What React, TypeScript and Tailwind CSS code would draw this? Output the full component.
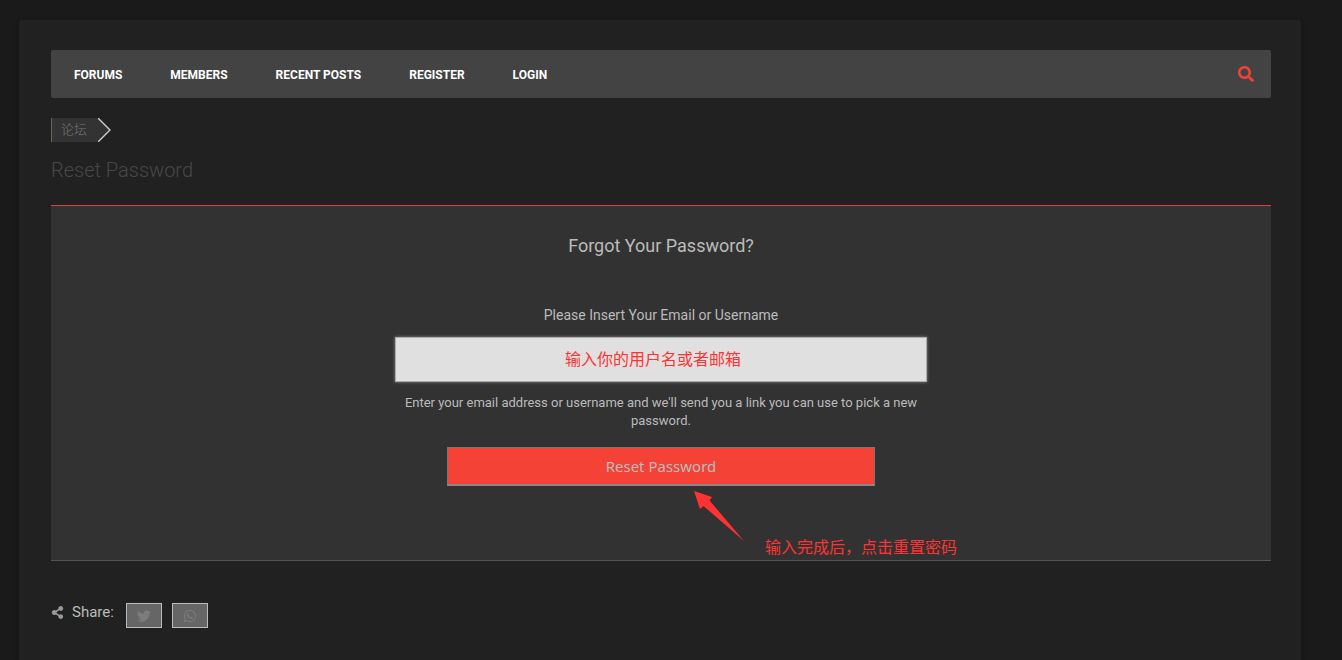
import { FaSearch, FaShareAlt, FaTwitter, FaWhatsapp } from "react-icons/fa";

const navItems = ["Forums", "Members", "Recent Posts", "Register", "Login"];

function NavBar() {
  return (
    <nav className="flex h-12 items-center justify-between rounded-xs bg-[#434343] pr-[17px] pl-[23px]">
      <ul className="flex gap-12">
        {navItems.map((item) => (
          <li key={item}>
            <a href="#" className="text-xs leading-5 font-bold text-white uppercase">
              {item}
            </a>
          </li>
        ))}
      </ul>
      <button type="button" aria-label="Search" className="text-[#f44336]">
        <FaSearch className="size-4" />
      </button>
    </nav>
  );
}

function Breadcrumb() {
  return (
    <div className="mt-5 flex h-6">
      <a
        href="#"
        className="flex items-center border-l border-[#666666] bg-[#333333] pr-[11px] pl-[9px] text-[13px] leading-6 font-light text-[#777777]"
      >
        论坛
      </a>
      <svg width="14" height="24" viewBox="0 0 14 24" aria-hidden="true">
        <path d="M0 0L12 12L0 24Z" fill="#333333" />
        <path d="M0 0L12 12L0 24" fill="none" stroke="#cccccc" strokeWidth="1.4" />
      </svg>
    </div>
  );
}

function ResetForm() {
  return (
    <form
      onSubmit={(e) => e.preventDefault()}
      className="mt-[23px] flex flex-col items-center border-t border-b border-t-[#d0443a] border-b-[#555555] bg-[#323232] px-4 pt-7 pb-[74px] text-center text-[#bbbbbb]"
    >
      <h2 className="text-lg leading-6">Forgot Your Password?</h2>
      <label htmlFor="userlogin" className="mt-[47px] text-sm leading-5">
        Please Insert Your Email or Username
      </label>
      <input
        id="userlogin"
        type="text"
        placeholder="输入你的用户名或者邮箱"
        className="mt-3 h-[45px] w-full max-w-[532px] border border-[#aaaaaa] bg-[#e0e0e0] pr-4 text-center text-base text-[#333333] shadow-[0_0_3px_#888888] outline-none placeholder:text-[#ff3333]"
      />
      <p className="mt-3 max-w-[532px] text-[13px] leading-[18px]">
        Enter your email address or username and we'll send you a link you can use to pick a new
        password.
      </p>
      <div className="relative mt-[17px] w-full max-w-[428px]">
        <button
          type="submit"
          className="block h-[39px] w-full border border-b-2 border-[#777777] border-b-[#888888] bg-[#f44336] font-['Noto_Sans','Noto_Sans_CJK_SC',sans-serif] text-[15px] text-[#bbbbbb]"
        >
          Reset Password
        </button>
        <svg
          className="absolute top-11 left-[247px]"
          width="51"
          height="51"
          viewBox="0 0 51 51"
          aria-hidden="true"
        >
          <path
            d="M0 0L18 6L15.500 9.500L50 50L9.500 15L6 18Z"
            fill="#ff3333"
          />
        </svg>
        <span className="absolute top-[89px] left-[318px] text-base leading-6 whitespace-nowrap text-[#ff3333]">
          输入完成后，点击重置密码
        </span>
      </div>
    </form>
  );
}

function ShareBar() {
  const linkStyle =
    "flex h-[25px] w-9 items-center justify-center border border-[#bbbbbb] bg-[#666666] text-[#7c7c7c]";

  return (
    <div className="mt-[42px] flex items-start">
      <div className="flex items-center gap-2 text-[#bbbbbb]">
        <FaShareAlt className="size-[13px] text-[#999999]" />
        <span className="text-[15px] leading-[18px]">Share:</span>
      </div>
      <div className="ml-3 flex gap-[10px]">
        <a href="#" aria-label="Twitter" className={linkStyle}>
          <FaTwitter className="size-[14px]" />
        </a>
        <a href="#" aria-label="WhatsApp" className={linkStyle}>
          <FaWhatsapp className="size-[14px]" />
        </a>
      </div>
    </div>
  );
}

export default function App() {
  return (
    <div className="flex min-h-screen flex-col bg-[#1a1a1a] pt-5 pr-[41px] pl-[19px] font-['Roboto','Noto_Sans_CJK_SC',sans-serif]">
      <main className="grow rounded-t-xs bg-[#212121] pt-[30px] pr-[30px] pb-8 pl-8 shadow-[0_2px_4px_#141414]">
        <NavBar />
        <Breadcrumb />
        <h1 className="mt-4 text-xl leading-6 font-light text-[#484848]">Reset Password</h1>
        <ResetForm />
        <ShareBar />
      </main>
    </div>
  );
}
